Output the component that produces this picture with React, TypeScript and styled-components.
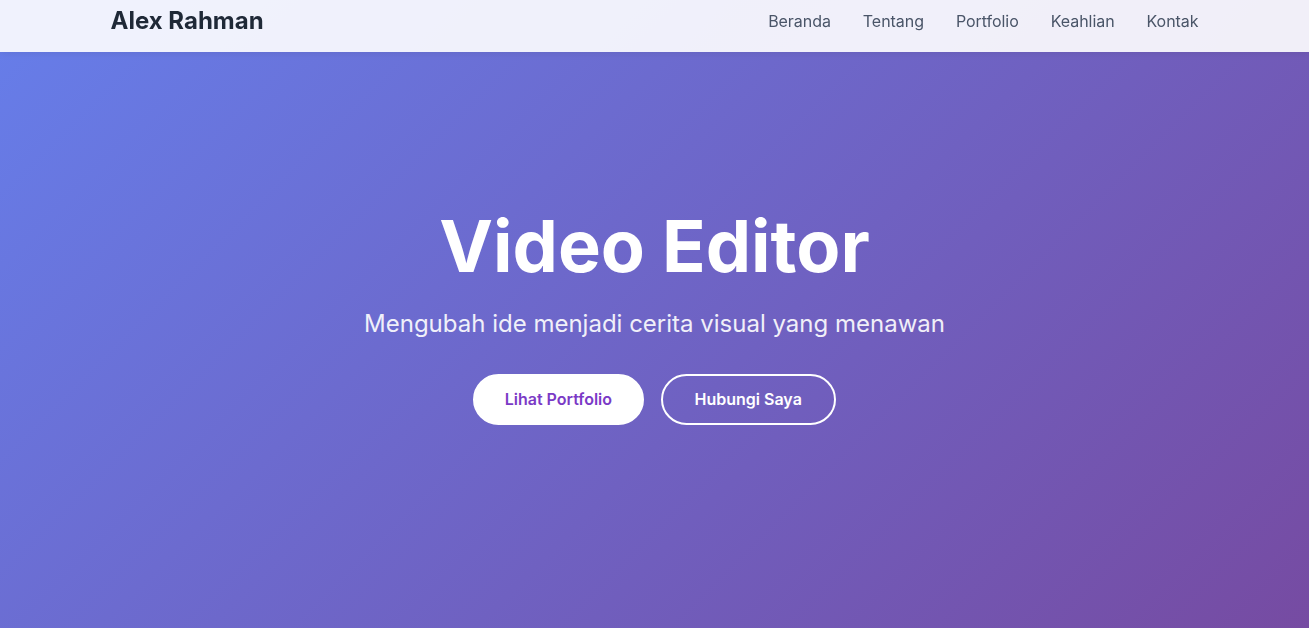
import React from "react";
import styled, { createGlobalStyle } from "styled-components";

const GlobalStyle = createGlobalStyle`
  * { box-sizing: border-box; margin: 0; padding: 0; }
  html, body { height: 100%; }
  body {
    font-family: Inter, "Noto Sans", "Liberation Sans", sans-serif;
    color: #2d3748;
    overflow: hidden;
  }
`;

const Header = styled.header`
  position: fixed;
  top: 0;
  left: 0;
  right: 0;
  z-index: 10;
  height: 52px;
  padding-top: 6px;
  background: rgba(255, 255, 255, 0.9);
  box-shadow: 0 1px 8px rgba(0, 0, 0, 0.08);
`;

const NavBar = styled.nav`
  max-width: 1088px;
  margin: 0 auto;
  display: flex;
  align-items: center;
  justify-content: space-between;
`;

const Logo = styled.div`
  font-size: 24px;
  font-weight: 700;
  color: #1f2937;
  line-height: 29px;
`;

const Links = styled.ul`
  list-style: none;
  display: flex;
  gap: 32px;
`;

const NavLink = styled.a`
  font-size: 16px;
  letter-spacing: -0.05px;
  color: #4a5568;
  text-decoration: none;
`;

const Hero = styled.section`
  height: 100vh;
  background: linear-gradient(135deg, #667eea 0%, #764ba2 100%);
  display: flex;
  flex-direction: column;
  align-items: center;
  justify-content: center;
  text-align: center;
  color: #fff;
`;

const Title = styled.h1`
  font-size: 72px;
  font-weight: 700;
  line-height: 1.2;
  margin-bottom: 16px;
`;

const Subtitle = styled.p`
  font-size: 24px;
  line-height: 1.5;
  opacity: 0.9;
  margin-bottom: 32px;
`;

const Buttons = styled.div`
  display: flex;
  gap: 17px;
`;

const Button = styled.a<{ $primary?: boolean }>`
  display: inline-block;
  padding: ${(p) => (p.$primary ? "14px 29.5px" : "14px 32px")};
  border: 2px solid #fff;
  border-radius: 50px;
  font-size: 16px;
  font-weight: 600;
  line-height: 19px;
  text-decoration: none;
  background: ${(p) => (p.$primary ? "#fff" : "transparent")};
  color: ${(p) => (p.$primary ? "#7b3ac6" : "#fff")};
`;

export default function App() {
  const links = ["Beranda", "Tentang", "Portfolio", "Keahlian", "Kontak"];
  return (
    <>
      <GlobalStyle />
      <Header>
        <NavBar>
          <Logo>Alex Rahman</Logo>
          <Links>
            {links.map((l) => (
              <li key={l}>
                <NavLink href="#">{l}</NavLink>
              </li>
            ))}
          </Links>
        </NavBar>
      </Header>
      <Hero>
        <Title>Video Editor</Title>
        <Subtitle>Mengubah ide menjadi cerita visual yang menawan</Subtitle>
        <Buttons>
          <Button $primary href="#">Lihat Portfolio</Button>
          <Button href="#">Hubungi Saya</Button>
        </Buttons>
      </Hero>
    </>
  );
}
